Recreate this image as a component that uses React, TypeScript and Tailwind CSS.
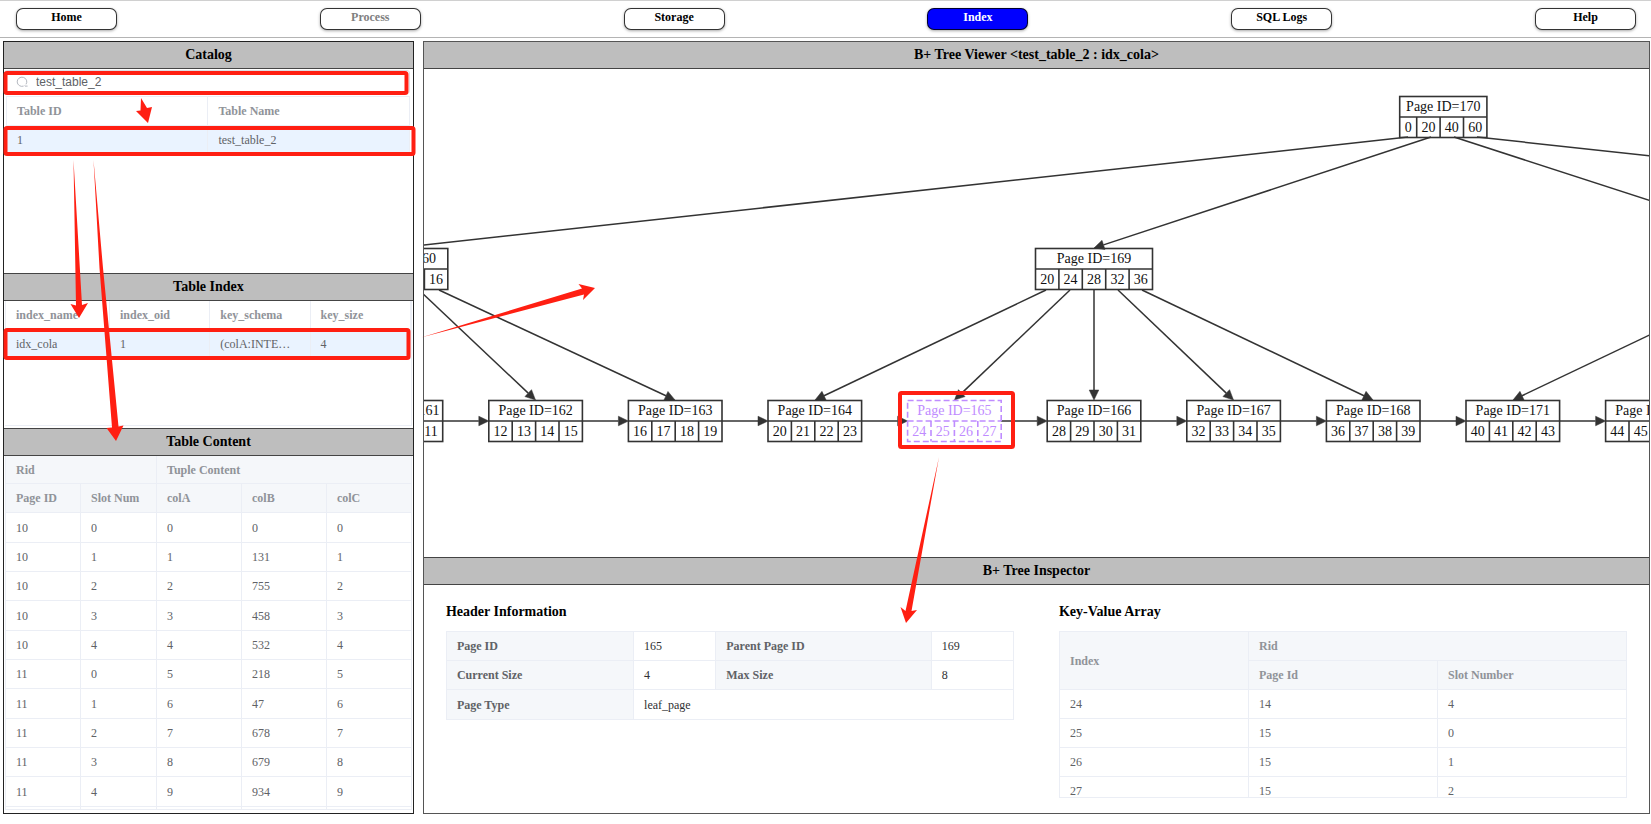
import React from "react";

type NavItem = { label: string; state?: "active" | "disabled" };

const NAV: NavItem[] = [
  { label: "Home" },
  { label: "Process", state: "disabled" },
  { label: "Storage" },
  { label: "Index", state: "active" },
  { label: "SQL Logs" },
  { label: "Help" },
];

function navClass(state?: string) {
  if (state === "active") return "bg-[#0000ff] text-white";
  if (state === "disabled") return "bg-white text-[#808080]";
  return "bg-white text-black";
}

function NavBar() {
  return (
    <nav className="flex h-[38px] items-center justify-between border-y border-t-[#d0d0d0] border-b-[#b4b4b4] pr-[15px] pl-4">
      {NAV.map((item) => (
        <button
          key={item.label}
          type="button"
          disabled={item.state === "disabled"}
          className={`h-[22px] w-[101px] rounded-[7px] border border-black/80 pb-1 text-[12px] leading-4 font-bold shadow-[0_1px_3px_rgba(0,0,0,0.35)] ${navClass(item.state)}`}
        >
          {item.label}
        </button>
      ))}
    </nav>
  );
}

function PanelHeader({ children, first }: { children: React.ReactNode; first?: boolean }) {
  return (
    <h2
      className={`flex shrink-0 items-center justify-center border-b border-[#444] bg-[#bebebe] text-[14px] leading-4 font-bold text-black ${first ? "h-[27px]" : "h-7 border-t"}`}
    >
      {children}
    </h2>
  );
}

const LINE = "border-[#ebeef5]";
const CELL = "truncate border-r border-b border-[#ebeef5] py-0 pr-[14px] pl-[10px] text-left";
const HEAD = "whitespace-nowrap border-r border-b border-[#ebeef5] px-[10px] py-0 text-left font-bold text-[#909399]";
const BASE_TABLE = `w-full table-fixed border-separate border-spacing-0 border-l ${LINE} text-[12px] leading-4 text-[#606266]`;
const TABLE = `${BASE_TABLE} border-t`;

function Catalog() {
  return (
    <section className="flex h-[231px] shrink-0 flex-col">
      <PanelHeader first>Catalog</PanelHeader>
      <div className="pt-px pr-[3px]">
        <label className="flex h-6 items-center gap-2 rounded-[3px] border border-[#dcdfe6] pl-[11px]">
          <svg viewBox="0 0 12 12" className="h-3 w-3 text-[#b4b8c0]" fill="none" stroke="currentColor" aria-hidden="true">
            <path d="M7.6 10.1A4.8 4.6 0 1 1 10 8.3M8.6 9.6L9 10.1H11.6" />
          </svg>
          <input
            aria-label="Search tables"
            defaultValue="test_table_2"
            className="h-5 min-w-0 flex-1 bg-transparent font-['Liberation_Sans',sans-serif] text-[12px] leading-4 text-[#606266] outline-none"
          />
        </label>
      </div>
      <div className="pt-[2px] pr-[3px] pl-[2px]">
        <table className={TABLE}>
          <thead>
            <tr className="h-[29px]">
              <th className={HEAD}>Table ID</th>
              <th className={HEAD}>Table Name</th>
            </tr>
          </thead>
          <tbody>
            <tr className="h-[29px] bg-[#eaf3ff]">
              <td className={CELL}>1</td>
              <td className={CELL}>test_table_2</td>
            </tr>
          </tbody>
        </table>
      </div>
    </section>
  );
}

function TableIndex() {
  return (
    <section className="flex h-[155px] shrink-0 flex-col">
      <PanelHeader>Table Index</PanelHeader>
      <div className={`mx-px mb-[2px] flex-1 border-r border-b ${LINE}`}>
        <table className={BASE_TABLE}>
          <colgroup>
            <col className="w-[104px]" />
            <col />
            <col />
            <col />
          </colgroup>
          <thead>
            <tr className="h-[29px]">
              {["index_name", "index_oid", "key_schema", "key_size"].map((h) => (
                <th key={h} className={HEAD}>{h}</th>
              ))}
            </tr>
          </thead>
          <tbody>
            <tr className="h-[29px] bg-[#eaf3ff]">
              {["idx_cola", "1", "(colA:INTEGER)", "4"].map((c, i) => (
                <td key={i} className={CELL}>{c}</td>
              ))}
            </tr>
          </tbody>
        </table>
      </div>
    </section>
  );
}

const TUPLES: string[][] = [
  ["10", "0", "0", "0", "0"],
  ["10", "1", "1", "131", "1"],
  ["10", "2", "2", "755", "2"],
  ["10", "3", "3", "458", "3"],
  ["10", "4", "4", "532", "4"],
  ["11", "0", "5", "218", "5"],
  ["11", "1", "6", "47", "6"],
  ["11", "2", "7", "678", "7"],
  ["11", "3", "8", "679", "8"],
  ["11", "4", "9", "934", "9"],
  ["", "", "", "", ""],
];

function TableContent() {
  return (
    <section className="flex min-h-0 flex-1 flex-col">
      <PanelHeader>Table Content</PanelHeader>
      <div className={`mx-px mb-[3px] min-h-0 flex-1 overflow-hidden border-b ${LINE}`}>
        <table className={BASE_TABLE}>
          <colgroup>
            <col className="w-[75px]" />
            <col className="w-[76px]" />
            <col />
            <col />
            <col />
          </colgroup>
          <thead className="bg-[#f5f7fa]">
            <tr className="h-7">
              <th colSpan={2} className={HEAD}>Rid</th>
              <th colSpan={3} className={HEAD}>Tuple Content</th>
            </tr>
            <tr className="h-[29px]">
              {["Page ID", "Slot Num", "colA", "colB", "colC"].map((h) => (
                <th key={h} className={HEAD}>{h}</th>
              ))}
            </tr>
          </thead>
          <tbody>
            {TUPLES.map((row, r) => (
              <tr key={r} className={r % 3 === 0 ? "h-[30px]" : "h-[29px]"}>
                {row.map((c, i) => (
                  <td key={i} className={CELL}>{c}</td>
                ))}
              </tr>
            ))}
          </tbody>
        </table>
      </div>
    </section>
  );
}

type Cell = { label: string; w: number };
type TreeNode = { page: number; x: number; y: number; cells: Cell[]; selected?: boolean };

const wide = (...labels: number[]): Cell[] =>
  labels.map((n) => ({ label: String(n), w: n < 10 ? 17 : 23.4 }));

const LEAF_Y = 331.5;
const LEAF_W = 93.6;
const leaf = (page: number, slot: number, first: number, selected?: boolean): TreeNode => ({
  page,
  x: 64.8 + slot * 139.6,
  y: LEAF_Y,
  cells: wide(first, first + 1, first + 2, first + 3),
  selected,
});

const LEAVES: TreeNode[] = [
  { page: 161, x: -62.1, y: LEAF_Y, cells: wide(8, 9, 10, 11) },
  leaf(162, 0, 12),
  leaf(163, 1, 16),
  leaf(164, 2, 20),
  leaf(165, 3, 24, true),
  leaf(166, 4, 28),
  leaf(167, 5, 32),
  leaf(168, 6, 36),
  leaf(171, 7, 40),
  leaf(172, 8, 44),
];

const INNER: TreeNode[] = [
  { page: 170, x: 975.7, y: 27.5, cells: wide(0, 20, 40, 60) },
  { page: 160, x: -74, y: 179.5, cells: wide(0, 4, 8, 12, 16) },
  { page: 169, x: 611.5, y: 179.5, cells: wide(20, 24, 28, 32, 36) },
];

const EDGES: [number, number, number, number][] = [
  [984, 68, -25, 178.7],
  [1007, 68, 670, 179],
  [1030, 68, 1360, 175],
  [1053, 68, 2070, 179],
  [-5, 221, 111.5, 331],
  [15, 221, 251, 331],
  [622, 221, 391, 331],
  [646, 221, 530.5, 331],
  [670, 221, 670, 331],
  [694, 221, 809.5, 331],
  [718, 221, 949, 331],
  [1320, 221, 1089, 331],
];

function Edge({ x1, y1, x2, y2 }: { x1: number; y1: number; x2: number; y2: number }) {
  const len = Math.hypot(x2 - x1, y2 - y1);
  const ux = (x2 - x1) / len;
  const uy = (y2 - y1) / len;
  const bx = x2 - ux * 10;
  const by = y2 - uy * 10;
  const head = `${x2},${y2} ${bx - uy * 4.8},${by + ux * 4.8} ${bx + uy * 4.8},${by - ux * 4.8}`;
  return (
    <g stroke="#333" fill="#333">
      <line x1={x1} y1={y1} x2={bx} y2={by} strokeWidth="1.5" />
      <polygon points={head} strokeWidth="0.5" />
    </g>
  );
}

function Node({ node }: { node: TreeNode }) {
  const total = node.cells.reduce((s, c) => s + c.w, 0);
  const color = node.selected ? "#bf8cff" : "#333";
  let left = node.x;
  const slots = node.cells.map((c) => {
    const slot = { ...c, x: left };
    left += c.w;
    return slot;
  });
  return (
    <g>
      <g fill="none" stroke={color} strokeWidth="1.6" strokeDasharray={node.selected ? "6 3" : undefined}>
        <rect x={node.x} y={node.y} width={total} height="41" />
        <line x1={node.x} y1={node.y + 20.5} x2={node.x + total} y2={node.y + 20.5} />
        {slots.slice(1).map((s) => (
          <line key={s.label} x1={s.x} y1={node.y + 20.5} x2={s.x} y2={node.y + 41} />
        ))}
      </g>
      <g fill={node.selected ? color : "#111"} fontSize="14" textAnchor="middle">
        <text x={node.x + total / 2} y={node.y + 14}>{`Page ID=${node.page}`}</text>
        {slots
          .filter((s) => s.x + s.w > 0)
          .map((s) => (
            <text key={s.label} x={s.x + s.w / 2} y={node.y + 35}>{s.label}</text>
          ))}
      </g>
    </g>
  );
}

function TreeCanvas() {
  return (
    <svg className="h-[488px] w-full shrink-0" role="img" aria-label="B+ tree of idx_cola">
      {EDGES.map(([x1, y1, x2, y2], i) => (
        <Edge key={i} x1={x1} y1={y1} x2={x2} y2={y2} />
      ))}
      {LEAVES.slice(1).map((n, i) => (
        <Edge key={n.page} x1={i === 0 ? 18.6 : n.x - 139.6 + LEAF_W} y1={LEAF_Y + 20.5} x2={n.x} y2={LEAF_Y + 20.5} />
      ))}
      {[...INNER, ...LEAVES].map((n) => (
        <Node key={n.page} node={n} />
      ))}
    </svg>
  );
}

const LABEL = `border-r border-b ${LINE} bg-[#f5f7fa] px-[10px] py-0 text-left font-bold text-[#606266]`;
const VALUE = `border-r border-b ${LINE} px-[10px] py-0 text-left text-[#303133]`;

function HeaderInformation() {
  return (
    <div className="min-w-0 flex-1">
      <h3 className="mb-[9px] text-[14px] leading-5 font-bold text-black">Header Information</h3>
      <table className={TABLE}>
        <colgroup>
          <col className="w-[33%]" />
          <col className="w-[14.5%]" />
          <col className="w-[38%]" />
          <col className="w-[14.5%]" />
        </colgroup>
        <tbody>
          <tr className="h-[29px]">
            <th className={LABEL}>Page ID</th>
            <td className={VALUE}>165</td>
            <th className={LABEL}>Parent Page ID</th>
            <td className={VALUE}>169</td>
          </tr>
          <tr className="h-[29px]">
            <th className={LABEL}>Current Size</th>
            <td className={VALUE}>4</td>
            <th className={LABEL}>Max Size</th>
            <td className={VALUE}>8</td>
          </tr>
          <tr className="h-[30px]">
            <th className={LABEL}>Page Type</th>
            <td colSpan={3} className={VALUE}>leaf_page</td>
          </tr>
        </tbody>
      </table>
    </div>
  );
}

const ENTRIES: string[][] = [
  ["24", "14", "4"],
  ["25", "15", "0"],
  ["26", "15", "1"],
  ["27", "15", "2"],
];

function KeyValueArray() {
  return (
    <div className="flex min-h-0 min-w-0 flex-1 flex-col">
      <h3 className="mb-[9px] text-[14px] leading-5 font-bold text-black">Key-Value Array</h3>
      <div className={`min-h-0 flex-1 overflow-hidden border-b ${LINE}`}>
        <table className={TABLE}>
          <thead className="bg-[#f5f7fa]">
            <tr className="h-[29px]">
              <th rowSpan={2} className={HEAD}>Index</th>
              <th colSpan={2} className={HEAD}>Rid</th>
            </tr>
            <tr className="h-[29px]">
              <th className={HEAD}>Page Id</th>
              <th className={HEAD}>Slot Number</th>
            </tr>
          </thead>
          <tbody>
            {ENTRIES.map((row) => (
              <tr key={row[0]} className="h-[29px]">
                {row.map((c, i) => (
                  <td key={i} className={CELL}>{c}</td>
                ))}
              </tr>
            ))}
          </tbody>
        </table>
      </div>
    </div>
  );
}

const MARKS: [number, number, number, number][] = [
  [5.5, 73, 401, 20],
  [5.5, 128, 408, 26],
  [5.5, 330, 403, 28],
  [900, 393, 113, 54],
];

const POINTERS = [
  "141,98 147,108 152,107 148,123 136,111 140.5,110.5",
  "73.5,160 82,305 88,303 79,318 70.5,304 76,305.5",
  "93.5,160 103,268 118.5,426.5 123.5,425.5 116,441 106.5,428 112,427.5 99.5,268",
  "421,337.5 582,288.5 578.5,284 595,288 583,300 584,294.5",
  "939,457 911.5,611 917,610 906,623 900.5,607 905.5,611",
];

function Annotations() {
  return (
    <svg className="pointer-events-none absolute inset-0 h-full w-full" aria-hidden="true">
      <g fill="none" stroke="#ff1f12" strokeWidth="4">
        {MARKS.map(([x, y, w, h]) => (
          <rect key={`${x}-${y}`} x={x} y={y} width={w} height={h} rx="1.5" />
        ))}
      </g>
      <g fill="#ff1f12">
        {POINTERS.map((p) => (
          <polygon key={p} points={p} />
        ))}
      </g>
    </svg>
  );
}

export default function App() {
  return (
    <div className="relative flex h-screen min-h-[824px] flex-col overflow-hidden bg-white font-['Liberation_Serif',serif]">
      <NavBar />
      <main className="flex min-h-0 flex-1 gap-[9px] pt-[3px] pr-px pb-[10px] pl-[3px]">
        <aside className="flex w-[24.95%] shrink-0 flex-col border border-[#222]">
          <Catalog />
          <TableIndex />
          <TableContent />
        </aside>
        <div className="flex min-w-0 flex-1 flex-col border border-[#555]">
          <PanelHeader first>{"B+ Tree Viewer <test_table_2 : idx_cola>"}</PanelHeader>
          <TreeCanvas />
          <PanelHeader>B+ Tree Inspector</PanelHeader>
          <section className="flex min-h-0 flex-1 gap-[45px] px-[22px] pt-[17px] pb-[15px]">
            <HeaderInformation />
            <KeyValueArray />
          </section>
        </div>
      </main>
      <Annotations />
    </div>
  );
}
